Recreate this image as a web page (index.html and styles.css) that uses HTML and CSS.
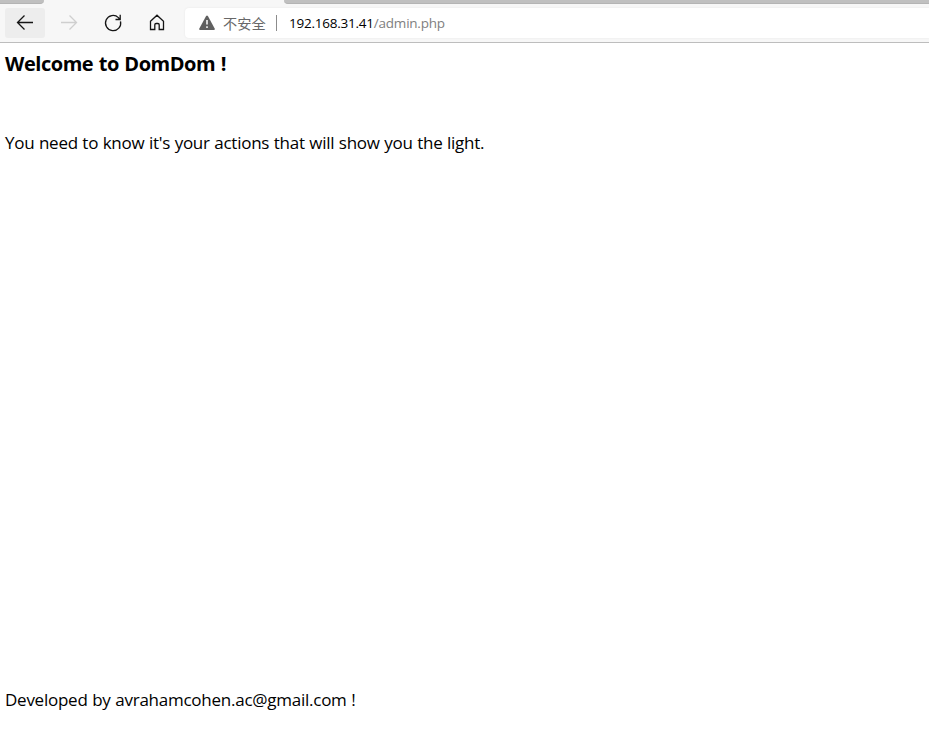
FILE: index.html
```html
<!DOCTYPE html>
<html lang="en">
<head>
<meta charset="utf-8">
<title>DomDom</title>
<link rel="stylesheet" href="styles.css">
</head>
<body>
<header class="browser">
  <div class="tabs"><div class="tab-left"></div><div class="tab-active"></div><div class="tab-rest"></div></div>
  <nav class="toolbar">
    <button class="tool back" aria-label="Back"><svg width="20" height="20" viewBox="0 0 20 20"><path d="M18 9.5H2.5M9.5 2.5l-7 7 7 7"/></svg></button>
    <button class="tool forward" aria-label="Forward"><svg width="20" height="20" viewBox="0 0 20 20"><path d="M2 9.5h15.5M10.5 2.5l7 7-7 7"/></svg></button>
    <button class="tool" aria-label="Refresh"><svg width="20" height="20" viewBox="0 0 20 20"><path d="M17.5 8.3A7.6 7.6 0 1 1 15.4 4.6L17 6.5M17.2 1.8v4.7h-4.7"/></svg></button>
    <button class="tool" aria-label="Home"><svg width="20" height="20" viewBox="0 0 20 20"><path d="M3.5 8.2L10 2.2l6.5 6v8.3h-4.3v-4.7q0-1.3-1.3-1.3H9.1q-1.3 0-1.3 1.3v4.7H3.5z"/></svg></button>
    <div class="address">
      <svg class="warning" width="16" height="16" viewBox="0 0 16 16"><path class="tri" d="M7.1.9Q8 0 8.9.9L15.8 13.7Q16 15 15 15H1Q0 15 .2 13.7z"/><path class="mark" d="M8 5v4.5M8 11.2v1.7"/></svg>
      <span class="insecure">不安全</span>
      <span class="divider"></span>
      <span class="url"><span class="host">192.168.31.41</span><span class="path">/admin.php</span></span>
    </div>
  </nav>
</header>
<main class="page">
  <h1>Welcome to DomDom !</h1>
  <p class="message">You need to know it's your actions that will show you the light.</p>
  <footer>Developed by avrahamcohen.ac@gmail.com !</footer>
</main>
</body>
</html>
```
FILE: styles.css
```css
* { box-sizing: border-box; }
body {
  margin: 0;
  height: 729px;
  overflow: hidden;
  display: flex;
  flex-direction: column;
  background: #fff;
  color: #000;
  font-family: "Open Sans", "Noto Sans CJK SC", sans-serif;
}
.browser { height: 43px; flex: none; background: #f7f7f7; border-bottom: 1px solid #bdbdbd; }
.tabs { display: flex; height: 4px; }
.tab-left { width: 44px; background: #c0c0c0; border-bottom: 1px solid #b4b4b4; border-bottom-right-radius: 4px; }
.tab-active { width: 240px; }
.tab-rest { flex: 1; background: #c0c0c0; border-bottom: 1px solid #b4b4b4; border-bottom-left-radius: 4px; }
.toolbar { display: flex; gap: 4px; padding: 4px 0 0 5px; }
.tool {
  display: flex; align-items: center; justify-content: center;
  width: 40px; height: 30px; padding: 0; border: 0; border-radius: 3px; background: none;
}
.tool svg { fill: none; stroke: #151515; stroke-width: 1.3; }
.back { background: #ededed; }
.forward svg { stroke: #cfcfcf; }
.address {
  flex: 1; display: flex; align-items: center; height: 30px; margin-left: 4px; padding-left: 14px;
  background: #fff; border-radius: 4px 0 0 4px; box-shadow: 0 0 2px #e4e4e4;
  font-size: 14px; line-height: 20px;
}
.warning { flex: none; }
.tri { fill: #606060; }
.mark { stroke: #fff; stroke-width: 1.5; }
.insecure { width: 43px; margin: -1px 0 0 8px; color: #686868; font-family: "Noto Sans CJK SC", sans-serif; font-size: 14.2px; white-space: nowrap; }
.divider { width: 1px; height: 16px; margin: 0 12px 0 10px; background: #8c8c8c; }
.url { white-space: nowrap; font-size: 13.5px; letter-spacing: -0.23px; }
.path { color: #808080; }
.page { flex: 1; display: flex; flex-direction: column; padding: 7px 5px 15px; font-size: 17px; line-height: 28px; letter-spacing: -0.25px; word-spacing: 0.35px; }
h1 { margin: 0; font-size: 20px; line-height: 28px; font-weight: 700; letter-spacing: -0.45px; word-spacing: 0.7px; }
.message { margin: 51px 0 0; }
footer { margin-top: auto; word-spacing: 0.5px; }
.message, footer, h1 { white-space: nowrap; }
```
